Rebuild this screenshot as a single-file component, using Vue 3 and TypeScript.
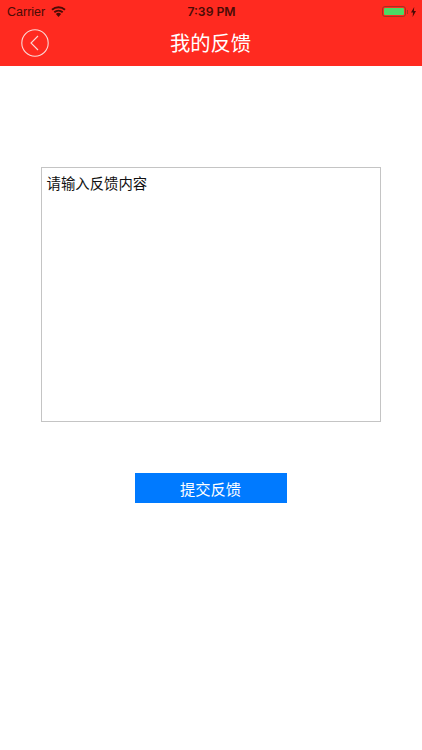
<script setup lang="ts">
const title: string = '我的反馈'
</script>

<template>
  <div class="page">
    <header class="head">
      <div class="status">
        <div class="status-left">
          <span class="carrier">Carrier</span>
          <svg class="wifi" width="15" height="11" viewBox="0 0 15 11">
            <path d="M7.5 11 L4.9 8 A3.9 3.9 0 0 1 10.1 8 Z" fill="#4a0c06" />
            <path d="M3.3 6.3 A6.4 6.4 0 0 1 11.7 6.3" fill="none" stroke="#4a0c06" stroke-width="1.9" />
            <path d="M1 3.7 A9.8 9.8 0 0 1 14 3.7" fill="none" stroke="#4a0c06" stroke-width="1.9" />
          </svg>
        </div>
        <span class="time">7:39 PM</span>
        <div class="status-right">
          <div class="battery"><div class="battery-fill"></div></div>
          <div class="battery-tip"></div>
          <svg class="bolt" width="5" height="10" viewBox="0 0 5 10">
            <path d="M3.2 0 L0 5.6 H2 L1.6 10 L5 4 H2.9 Z" fill="#4a0c06" />
          </svg>
        </div>
      </div>
      <div class="nav">
        <button class="back" type="button" aria-label="back">
          <svg width="28" height="28" viewBox="0 0 28 28">
            <circle cx="14" cy="14" r="13.2" fill="none" stroke="#fbd9d6" stroke-width="1.1" />
            <path d="M17 7 L10 14 L17 21" fill="none" stroke="#fbd9d6" stroke-width="1.1" />
          </svg>
        </button>
        <h1 class="title">{{ title }}</h1>
      </div>
    </header>
    <main class="content">
      <div class="box">请输入反馈内容</div>
      <button class="submit" type="button">提交反馈</button>
    </main>
  </div>
</template>

<style scoped>
.page {
  width: 422px;
  height: 750px;
  background: #fff;
  font-family: "Liberation Sans", "Noto Sans CJK SC", sans-serif;
  overflow: hidden;
}
.head {
  background: #ff2a20;
  height: 66px;
}
.status {
  height: 22px;
  box-sizing: border-box;
  padding: 1px 6px 0 7px;
  display: grid;
  grid-template-columns: 1fr auto 1fr;
  align-items: center;
  color: #4a0c06;
  font-size: 12.5px;
}
.status-left {
  display: flex;
  align-items: center;
  gap: 6px;
}
.wifi {
  margin-top: -1px;
}
.time {
  font-size: 12.2px;
  font-family: Inter, "Liberation Sans", sans-serif;
  font-weight: 600;
}
.status-right {
  display: flex;
  align-items: center;
  justify-content: flex-end;
}
.battery {
  width: 24px;
  height: 11px;
  border: 1px solid #a83020;
  border-radius: 3px;
  padding: 1px;
  box-sizing: border-box;
}
.battery-fill {
  height: 100%;
  background: #4cd964;
  border-radius: 1px;
}
.battery-tip {
  width: 1px;
  height: 4px;
  background: #a83020;
  margin-left: 1px;
  margin-right: 3px;
}
.nav {
  height: 44px;
  position: relative;
  display: flex;
  align-items: center;
  justify-content: center;
}
.back {
  position: absolute;
  left: 20.5px;
  top: 7px;
  width: 28px;
  height: 28px;
  padding: 0;
  border: 0;
  background: none;
  display: block;
}
.back svg {
  display: block;
}
.title {
  margin: 0 1px 0 0;
  color: #fff;
  font-size: 20.3px;
  font-weight: 400;
  line-height: 40px;
}
.content {
  display: flex;
  flex-direction: column;
  align-items: center;
  padding-top: 101px;
}
.box {
  width: 340px;
  height: 255px;
  box-sizing: border-box;
  border: 1px solid #c4c4c4;
  padding: 6px 4.5px;
  font-size: 14.4px;
  line-height: 20px;
  color: #111;
}
.submit {
  margin-top: 51px;
  width: 152px;
  height: 30px;
  padding: 0 1px 1px 0;
  border: 0;
  background: #007aff;
  color: #fff;
  font: inherit;
  font-size: 15.3px;
}
</style>
